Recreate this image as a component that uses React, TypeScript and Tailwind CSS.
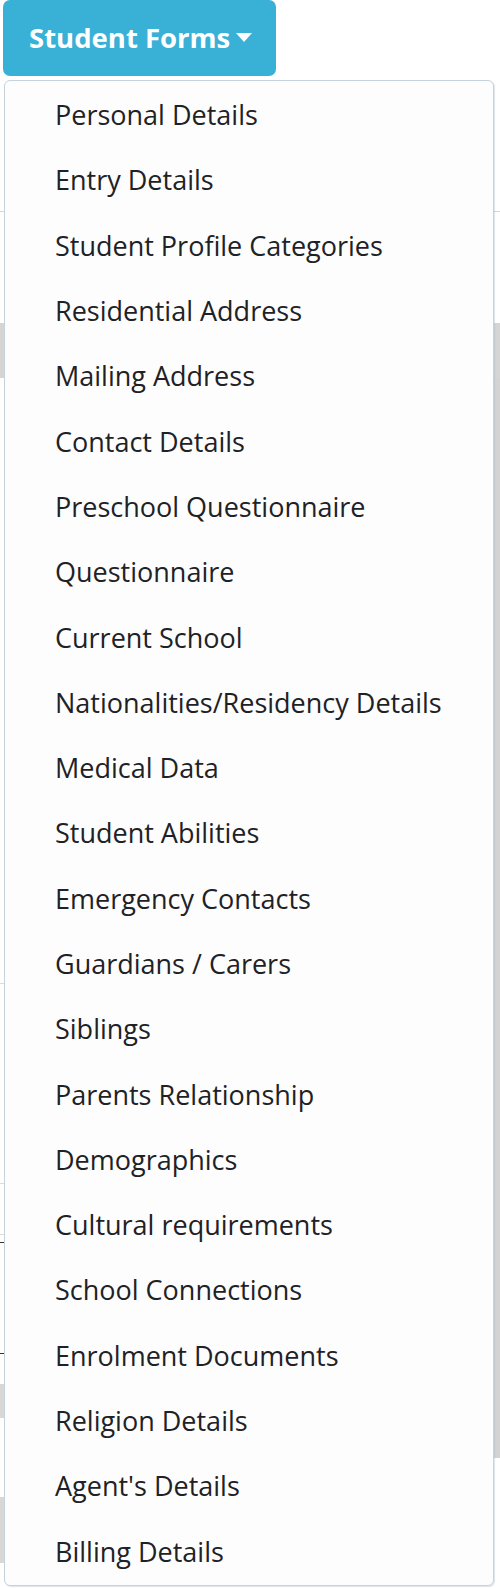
import React from "react";

const items = [
  "Personal Details",
  "Entry Details",
  "Student Profile Categories",
  "Residential Address",
  "Mailing Address",
  "Contact Details",
  "Preschool Questionnaire",
  "Questionnaire",
  "Current School",
  "Nationalities/Residency Details",
  "Medical Data",
  "Student Abilities",
  "Emergency Contacts",
  "Guardians / Carers",
  "Siblings",
  "Parents Relationship",
  "Demographics",
  "Cultural requirements",
  "School Connections",
  "Enrolment Documents",
  "Religion Details",
  "Agent's Details",
  "Billing Details",
];

export default function App() {
  return (
    <div
      className="relative w-[500px] h-[1588px] overflow-hidden bg-white"
      style={{ fontFamily: '"Open Sans", "Noto Sans", sans-serif' }}
    >
      {/* page behind the menu */}
      <div className="flex flex-col">
        <div className="h-[76px] pl-[3px]">
          <button className="flex h-[76px] w-[273px] items-center rounded-[7px] bg-[#39b1d6] pl-[26px] text-[27.5px] font-bold text-white">
            <span className="leading-none">Student Forms</span>
            <svg width="16" height="9" viewBox="0 0 16 9" className="ml-[6px] mt-[-2px]">
              <path d="M0 0 L16 0 L8 9 Z" fill="white" />
            </svg>
          </button>
        </div>
        <div className="h-[136px] border-b border-[#d6d6d6]" />
        <div className="h-[111px]" />
        <div className="h-[55px] bg-[#d5d5d5]" />
        <div className="flex h-[1080px]">
          <div className="flex flex-1 flex-col">
            <div className="h-[605px]" />
            <div className="h-[200px] border-t border-[#dcdcdc]" />
            <div className="h-[51px] border-t border-[#dcdcdc]" />
            <div className="h-[8px] border-t border-[#dcdcdc]" />
            <div className="h-[111px] border-t border-[#333333]" />
            <div className="h-[31px] border-t border-[#333333]" />
            <div className="h-[34px] bg-[#d8d8d8]" />
          </div>
          <div className="w-[6px] bg-[#d3d3d3]" />
        </div>
        <div className="h-[39px]" />
        <div className="h-[66px] w-[4px] bg-[#d8d8d8]" />
      </div>

      {/* dropdown menu overlay */}
      <div className="absolute left-[4px] top-[80px] w-[490px] rounded-[6px] border border-[#c6d3dd] bg-[#fdfdfd] shadow-[1px_1px_1px_rgba(160,180,195,0.35)]">
        <ul className="flex flex-col py-[1px]">
          {items.map((t) => (
            <li
              key={t}
              className="flex h-[65.3px] items-center pl-[50px] text-[27px] leading-none text-[#1e2226]"
            >
              {t}
            </li>
          ))}
        </ul>
      </div>
    </div>
  );
}
